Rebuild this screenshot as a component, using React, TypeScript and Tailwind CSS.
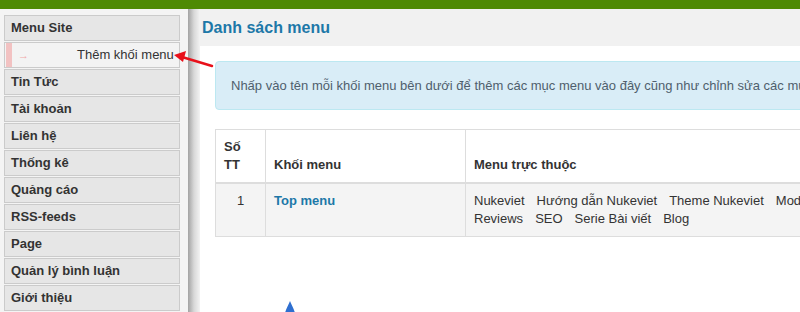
const sideItems = [
  "Tin Tức",
  "Tài khoản",
  "Liên hệ",
  "Thống kê",
  "Quảng cáo",
  "RSS-feeds",
  "Page",
  "Quản lý bình luận",
  "Giới thiệu",
];

const subMenus = [
  "Nukeviet",
  "Hướng dẫn Nukeviet",
  "Theme Nukeviet",
  "Module Nukeviet",
  "Reviews",
  "SEO",
  "Serie Bài viết",
  "Blog",
];

function SideItem({ label }: { label: string }) {
  return (
    <div className="h-[26px] border border-[#cbcbcb] bg-[#e6e6e6] px-[6px] flex items-center text-[13px] font-bold text-[#333]">
      {label}
    </div>
  );
}

export default function App() {
  return (
    <div className="relative w-[800px] h-[312px] overflow-hidden bg-white font-['Liberation_Sans',Arial,sans-serif] text-[13px] text-[#333]">
      {/* top bar */}
      <div className="h-[9px] bg-[#4e8a04]" />

      <div className="flex h-[303px]">
        {/* Sidebar */}
        <aside className="w-[188px] shrink-0 bg-[#f4f4f4] pl-[4px] pr-[8px] pt-[6px] flex flex-col gap-[1px]">
          <SideItem label="Menu Site" />
          <div className="h-[26px] border border-[#cbcbcb] bg-[#f3f3f3] flex items-center">
            <span className="ml-[1px] w-[6px] h-full bg-[#f2c2c2]" />
            <span className="ml-[6px] text-[#f0a8a8] text-[11px]">→</span>
            <span className="ml-[48px] text-[#333]">Thêm khối menu</span>
          </div>
          {sideItems.map((s) => (
            <SideItem key={s} label={s} />
          ))}
        </aside>

        {/* shadow */}
        <div className="w-[12px] shrink-0 bg-gradient-to-r from-[#a3a3a3] via-[#d8d8d8] to-[#f3f3f3]" />

        {/* Main */}
        <main className="flex-1 min-w-0 overflow-hidden flex flex-col">
          <div className="h-[37px] bg-[#f1f1f1] flex items-center pl-[2px] shrink-0">
            <h2 className="text-[16px] font-bold text-[#1d78a8] whitespace-nowrap">Danh sách menu</h2>
          </div>

          <div className="flex-1 bg-white px-[15px] pt-[15px] relative">
            <div className="h-[49px] w-[640px] rounded-[4px] border border-[#bce8f1] bg-[#d9edf7] pl-[15px] flex items-center whitespace-nowrap overflow-hidden text-[#4f5f6d]">
              Nhấp vào tên mỗi khối menu bên dưới để thêm các mục menu vào đây cũng như chỉnh sửa các mục menu đã có
            </div>

            <table className="mt-[19px] w-[687px] border-collapse border border-[#dddddd] leading-[18px] table-fixed">
              <colgroup>
                <col className="w-[50px]" />
                <col className="w-[200px]" />
                <col className="w-[437px]" />
              </colgroup>
              <thead>
                <tr className="border-b-2 border-[#dddddd]">
                  <th className="border border-[#dddddd] px-[8px] py-[8px] text-left align-bottom font-bold">
                    Số
                    <br />
                    TT
                  </th>
                  <th className="border border-[#dddddd] px-[8px] py-[8px] text-left align-bottom font-bold">
                    Khối menu
                  </th>
                  <th className="border border-[#dddddd] px-[8px] py-[8px] text-left align-bottom font-bold">
                    Menu trực thuộc
                  </th>
                </tr>
              </thead>
              <tbody>
                <tr className="bg-[#f4f4f4]">
                  <td className="border border-[#dddddd] px-[8px] py-[8px] text-center align-top">1</td>
                  <td className="border border-[#dddddd] px-[8px] py-[8px] align-top">
                    <a className="font-bold text-[#1d78a8]">Top menu</a>
                  </td>
                  <td className="border border-[#dddddd] px-[8px] py-[8px] align-top">
                    {subMenus.map((m) => (
                      <span key={m} className="inline-block mr-[12px] whitespace-nowrap">
                        {m}
                      </span>
                    ))}
                  </td>
                </tr>
              </tbody>
            </table>

            {/* back-to-top marker */}
            <svg className="absolute left-[84px] top-[255px]" width="12" height="12" viewBox="0 0 12 12">
              <path d="M6 0 C7 3 10 8 11 12 L1 12 C2 8 5 3 6 0 Z" fill="#2f6fd0" />
            </svg>
          </div>
        </main>
      </div>

      {/* red annotation arrow */}
      <svg className="absolute left-0 top-0 pointer-events-none" width="800" height="312">
        <line x1="212" y1="66" x2="182" y2="57" stroke="#e8101a" strokeWidth="2.5" strokeLinecap="round" />
        <path d="M174 55 L186 51 L183 62 Z" fill="#e8101a" />
      </svg>
    </div>
  );
}
